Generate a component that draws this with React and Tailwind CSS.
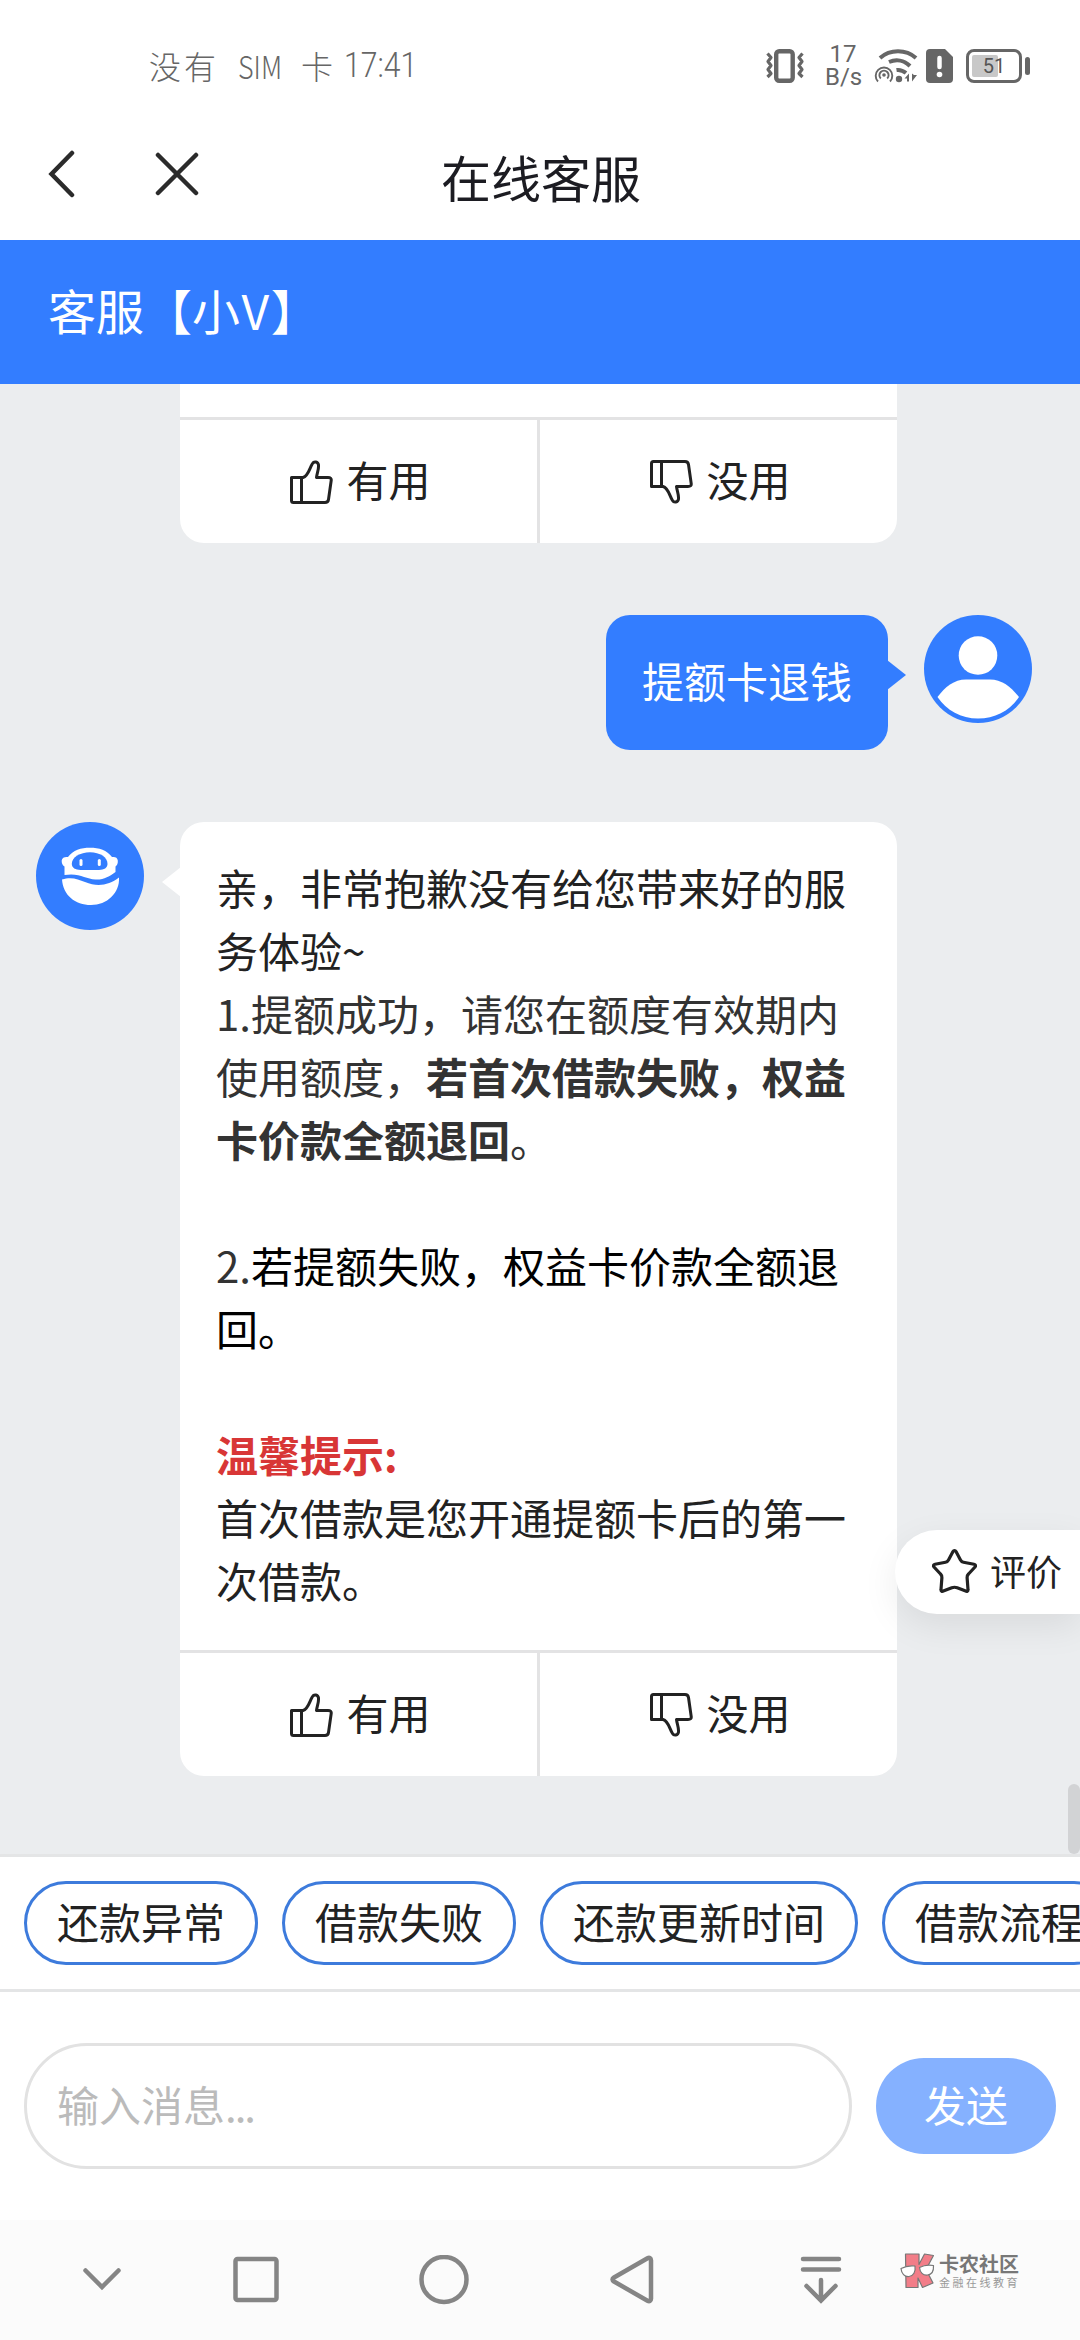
import React from 'react';

const quickReplies = ['还款异常', '借款失败', '还款更新时间', '借款流程'];

const ThumbUp = ({ className = '' }) => (
    <svg width="44" height="44" viewBox="0 0 44 44" fill="none" stroke="#222" strokeWidth="3" strokeLinejoin="round" className={className}>
        <path d="M2.500 17.500h11.500C19.500 16 20.500 8 23.500 3.500c1.500-2.500 5.500-2 6 1.500.5 4-1.500 8-2 12.500h11.500c2.500 0 3.500 1 3.200 3l-2.700 19c-.3 2-1.500 3-3.500 3H4.500c-1.500 0-2-.5-2-2z" />
        <path d="M12.500 17.500v25" />
    </svg>
);

const StatusBar = () => (
    <div className="h-[108px] flex items-center pl-[149px] pr-[50px] pt-[26px] text-[#666]">
        <div className="flex items-center pb-[4px] text-[32px] leading-none font-light whitespace-pre">
            <span className="tracking-[3px]">没有</span>
            <span className="ml-[19px] w-[46px] inline-block origin-left scale-x-[0.84]">SIM</span>
            <span className="ml-[17px]">卡</span>
            <span className="ml-[11px] font-[Roboto,sans-serif] text-[35px] origin-left scale-x-[0.86]">17:41</span>
        </div>
        <div className="ml-auto flex items-center pb-[2px]">
            {/* Vibrate */}
            <svg width="40" height="36" viewBox="0 0 40 36" fill="none" stroke="#666" className="shrink-0">
                <rect x="11.200" y="3.200" width="16.500" height="29.500" rx="3" strokeWidth="4.400" />
                <path d="M2.500 5.500l3.500 4-3 4 3 4-3 4 3 4-3.500 3.500M37.500 5.500l-3.500 4 3 4-3 4 3 4-3 4 3.500 3.500" strokeWidth="3.200" strokeLinejoin="round" />
            </svg>
            <div className="ml-[20px] w-[36px] text-center font-[Roboto,sans-serif] text-[24px] leading-[23px]">
                <div>17</div>
                <div>B/s</div>
            </div>
            {/* Wifi + hotspot */}
            <svg width="46" height="36" viewBox="0 0 46 36" fill="none" stroke="#666" strokeWidth="4" className="ml-[13px] shrink-0">
                <path d="M6 10c10-9 26-9 36 0M15 14c7-3 15-2 21 4M22.500 22c3.500-.5 6.500.5 9.500 3" />
                <g strokeWidth="1.900">
                    <path d="M4 33.500a8.300 8.300 0 1 1 12 0M6.800 30.500a4.600 4.600 0 1 1 6.400 0" />
                </g>
                <circle cx="10" cy="27" r="1.800" fill="#666" stroke="none" />
                <circle cx="25" cy="31" r="3.200" fill="#666" stroke="none" />
                <path d="M30.500 30.500l4.500-5v8h-2v-3zM38 25.500v8l5-6.500h-3z" fill="#666" stroke="none" />
            </svg>
            {/* SIM alert */}
            <svg width="27" height="34" viewBox="0 0 27 34" className="ml-[6px] shrink-0">
                <path d="M4 0h15l8 8v22a4 4 0 0 1-4 4H4a4 4 0 0 1-4-4V4a4 4 0 0 1 4-4z" fill="#666" />
                <path d="M13.500 9v9" stroke="#fff" strokeWidth="4.500" strokeLinecap="round" />
                <circle cx="13.500" cy="25.500" r="2.800" fill="#fff" />
            </svg>
            <div className="ml-[13px] w-[56px] h-[34px] border-[3px] border-[#666] rounded-[8px] p-[3px] relative">
                <div className="w-[26px] h-full bg-[#c8c8c8] rounded-[2px]" />
                <span className="absolute inset-0 flex items-center justify-center text-[20px] leading-none font-[Roboto,sans-serif] text-[#555]">51</span>
            </div>
            <div className="ml-[3px] w-[5px] h-[18px] rounded-full bg-[#666]" />
        </div>
    </div>
);

const TitleBar = () => (
    <div className="h-[132px] relative flex items-center pl-[48px]">
        <svg width="28" height="48" viewBox="0 0 28 48" fill="none" stroke="#2b2b2b" strokeWidth="4.500" strokeLinecap="round" strokeLinejoin="miter">
            <path d="M24 3L3.500 24 24 45" />
        </svg>
        <svg width="44" height="44" viewBox="0 0 44 44" fill="none" stroke="#2b2b2b" strokeWidth="4.500" strokeLinecap="round" className="ml-[79px]">
            <path d="M3 3l38 38M41 3L3 41" />
        </svg>
        <h1 className="ml-[242px] pt-[3px] text-[50px] leading-none text-[#1c1c22] font-normal">在线客服</h1>
    </div>
);

const Feedback = () => (
    <div className="flex border-t-[3px] border-[#e3e3e4] h-[126px] text-[42px] text-[#222]">
        <button className="w-[360px] border-r-[3px] border-[#e3e3e4] flex items-center justify-center gap-[13px] pl-[3px]">
            <ThumbUp />
            <span className="pb-[6px]">有用</span>
        </button>
        <button className="flex-1 flex items-center justify-center gap-[13px] pl-[3px]">
            <ThumbUp className="-scale-y-100" />
            <span className="pb-[6px]">没用</span>
        </button>
    </div>
);

const BotAvatar = () => (
    <svg width="108" height="108" viewBox="0 0 108 108" className="shrink-0">
        <circle cx="54" cy="54" r="54" fill="#337dff" />
        <path d="M32 35C37 28 45 25.700 54 25.700S71 28 76 35c3-.5 5.500.5 5.800 3.500.3 3-.8 5-2.300 6V50c-6 4.500-12 8-20 7.500-10-.5-16-7-31-4.500v-8.500c-2-1-3-3.500-2.800-6C26 35.500 29 34.500 32 35z" fill="#fff" />
        <path d="M54 30.300c10 0 17.500 5 17.500 11.500C71.500 46 68 48 63 48H44.500c-5 0-8.700-2-8.700-6.200 0-6.500 8.200-11.500 18.200-11.500z" fill="#337dff" />
        <rect x="43.500" y="37" width="3" height="7" rx="1.500" fill="#fff" />
        <rect x="61.800" y="37" width="3" height="7" rx="1.500" fill="#fff" />
        <path d="M26 57.500c9-3 16-.5 23 2.500 13 5.500 24 3 34-4.500C84 71 71 83 55 83S27 73 26 57.500z" fill="#fff" />
    </svg>
);

const UserAvatar = () => (
    <svg width="108" height="108" viewBox="0 0 108 108" className="shrink-0">
        <circle cx="54" cy="54" r="54" fill="#337dff" />
        <circle cx="54" cy="40.500" r="19.300" fill="#fff" />
        <path d="M13.500 82C21 72 30 64.500 42 64.500h24c12 0 21 7.500 29 17.500-9 13.500-24 21.500-41 21.500S22.500 95.500 13.500 82z" fill="#fff" />
    </svg>
);

const NavBar = () => (
    <div className="h-[120px] bg-[#fbfbfb] flex items-center pl-[82px]">
        <svg width="40" height="50" viewBox="0 0 40 50" fill="none" stroke="#858585" strokeWidth="4.500" strokeLinecap="round">
            <path d="M3.500 15.500L20 32 36.500 15.500" />
        </svg>
        <svg width="50" height="50" viewBox="0 0 50 50" fill="none" stroke="#858585" strokeWidth="4.500" className="ml-[109px]">
            <rect x="4.500" y="4" width="41" height="41" rx="2" />
        </svg>
        <svg width="50" height="50" viewBox="0 0 50 50" fill="none" stroke="#858585" strokeWidth="4.500" className="ml-[138px]">
            <circle cx="25" cy="24.500" r="22.500" />
        </svg>
        <svg width="46" height="50" viewBox="0 0 46 50" fill="none" stroke="#858585" strokeWidth="4.500" strokeLinejoin="round" className="ml-[140px]">
            <path d="M38.500 3.300c1.800-1 3.500-.3 3.500 2v38.500c0 2.300-1.700 3-3.500 2L5 26.500c-2-1.300-2-2.700 0-4z" />
        </svg>
        <svg width="42" height="50" viewBox="0 0 42 50" fill="none" stroke="#858585" strokeWidth="4.500" strokeLinecap="round" className="ml-[145px]">
            <path d="M3 4h36M3 14.500h36M21 25v20M6.500 31L21 45.500 35.500 31" />
        </svg>
        {/* Community watermark */}
        <div className="ml-[58px] -mt-[19px] flex items-center gap-[4px]">
            <svg width="35" height="36" viewBox="0 0 35 36" stroke="#777" strokeWidth="1.200" strokeLinejoin="round">
                <path d="M5.500 1H19v10.500L24.500 1l9 1.500-7.500 14 7 13.500-10.500 4.500L18 25v9.500H6z" fill="#f27d88" />
                <path d="M1 15.500c4.500-2.500 9-3 14-2.500.8 6-1.500 10-6 10.500-4.500.5-7.500-3-8-8zM19.500 14.500c4.500-2.500 9-3 14-2 .3 5.500-1.500 9-6 9.500-4.500.5-7.500-2.500-8-7.500z" fill="#fff" />
            </svg>
            <div className="leading-none whitespace-nowrap">
                <div className="text-[20px] leading-[20px] font-bold text-[#777]">卡农社区</div>
                <div className="mt-[2px] text-[11px] leading-[12px] tracking-[2.500px] text-[#999]">金融在线教育</div>
            </div>
        </div>
    </div>
);

const App = () => {
    return (
        <div lang="zh-CN" className="relative w-[1080px] h-[2340px] overflow-hidden bg-white flex flex-col font-['Noto_Sans_CJK_SC',sans-serif]">
            <StatusBar />
            <TitleBar />

            <div className="h-[144px] shrink-0 bg-[#337dff] flex items-center pl-[48px] pb-[6px] text-[48px] text-white">
                客服【小<span className="px-[1.5px]">V</span>】
            </div>

            {/* Messages */}
            <div className="h-[1470px] shrink-0 bg-[#ebedef] relative">
                <div className="ml-[180px] w-[717px] bg-white rounded-b-[24px] pt-[33px]">
                    <Feedback />
                </div>

                <div className="mt-[72px] flex justify-end items-start pr-[48px] gap-[36px]">
                    <div className="relative bg-[#337dff] rounded-[24px] px-[36px] pt-[33px] pb-[39px] text-[42px] leading-[63px] text-white">
                        提额卡退钱
                        <svg width="19" height="30" viewBox="0 0 19 30" className="absolute left-full top-[45px] -ml-px">
                            <path d="M0 0l19 15L0 30z" fill="#337dff" />
                        </svg>
                    </div>
                    <UserAvatar />
                </div>

                <div className="mt-[72px] flex items-start pl-[36px] gap-[36px]">
                    <BotAvatar />
                    <div className="relative w-[717px] bg-white rounded-[24px]">
                        <svg width="19" height="30" viewBox="0 0 19 30" className="absolute right-full top-[45px] -mr-px">
                            <path d="M19 0L0 15l19 15z" fill="#fff" />
                        </svg>
                        <div className="px-[36px] pt-[33px] pb-[39px] text-[42px] leading-[63px] text-[#222]">
                            <p>亲，非常抱歉没有给您带来好的服<br />务体验~</p>
                            <p className="text-[#333]">
                                1.提额成功，请您在额度有效期内<br />
                                使用额度，<b>若首次借款失败，权益<br />卡价款全额退回</b>。
                            </p>
                            <br />
                            <p className="text-black">
                                <span className="text-[#333]">2.</span>若提额失败，权益卡价款全额退<br />回。
                            </p>
                            <br />
                            <p className="text-[#d83636] font-bold">温馨提示:</p>
                            <p>首次借款是您开通提额卡后的第一<br />次借款。</p>
                        </div>
                        <Feedback />
                    </div>
                </div>

                {/* Floating rating button */}
                <button className="absolute right-0 top-[1146px] w-[185px] h-[84px] bg-white rounded-l-full flex items-center pl-[36px] gap-[12px] shadow-[0_12px_36px_rgba(0,0,0,0.08)] text-[36px] text-[#222]">
                    <svg width="47" height="46" viewBox="0 0 47 46" fill="none" stroke="#222" strokeWidth="3.200" strokeLinejoin="round" className="-mt-[2px]">
                        <path d="M22 3.500c.7-1.300 2.300-1.300 3 0l4.500 8.500c.7 1.300 1.500 2 3 2.300l10.500 2c1.600.3 2 1.700 1 2.700l-6.500 7c-1 1-1.500 2-1.400 3.600L37 41.500c.2 1.600-1 2.300-2.300 1.600l-8.500-3.300c-1.700-.7-3.700-.7-5.400 0l-8.500 3.300c-1.300.7-2.500 0-2.300-1.600l.9-11.900c.1-1.600-.4-2.600-1.400-3.600l-6.500-7c-1-1-.6-2.400 1-2.700l10.500-2c1.500-.3 2.300-1 3-2.300z" />
                    </svg>
                    <span className="whitespace-nowrap pb-[5px]">评价</span>
                </button>
                <div className="absolute right-0 top-[1400px] w-[12px] h-[70px] rounded-full bg-[#d2d3d5]" />
            </div>

            {/* Quick replies */}
            <div className="h-[138px] shrink-0 border-y-[3px] border-[#e4e5e6] flex items-center gap-[24px] pl-[24px] overflow-hidden">
                {quickReplies.map((label) => (
                    <button key={label} className="h-[84px] shrink-0 px-[30px] pb-[5px] border-[3px] border-[#3d7bdc] rounded-full text-[42px] leading-none text-[#222] whitespace-nowrap">
                        {label}
                    </button>
                ))}
            </div>

            {/* Input */}
            <div className="h-[228px] shrink-0 flex items-center gap-[24px] px-[24px]">
                <div className="flex-1 h-[126px] border-[3px] border-[#e2e2e2] rounded-full flex items-center pl-[30px] pb-[6px] text-[42px] text-[#bbb]">
                    输入消息<span className="tracking-[-2px]">...</span>
                </div>
                <button className="w-[180px] h-[96px] pb-[4px] rounded-full bg-[#85b1ff] text-white text-[42px] leading-none">发送</button>
            </div>

            <NavBar />
        </div>
    );
};

export default App;
